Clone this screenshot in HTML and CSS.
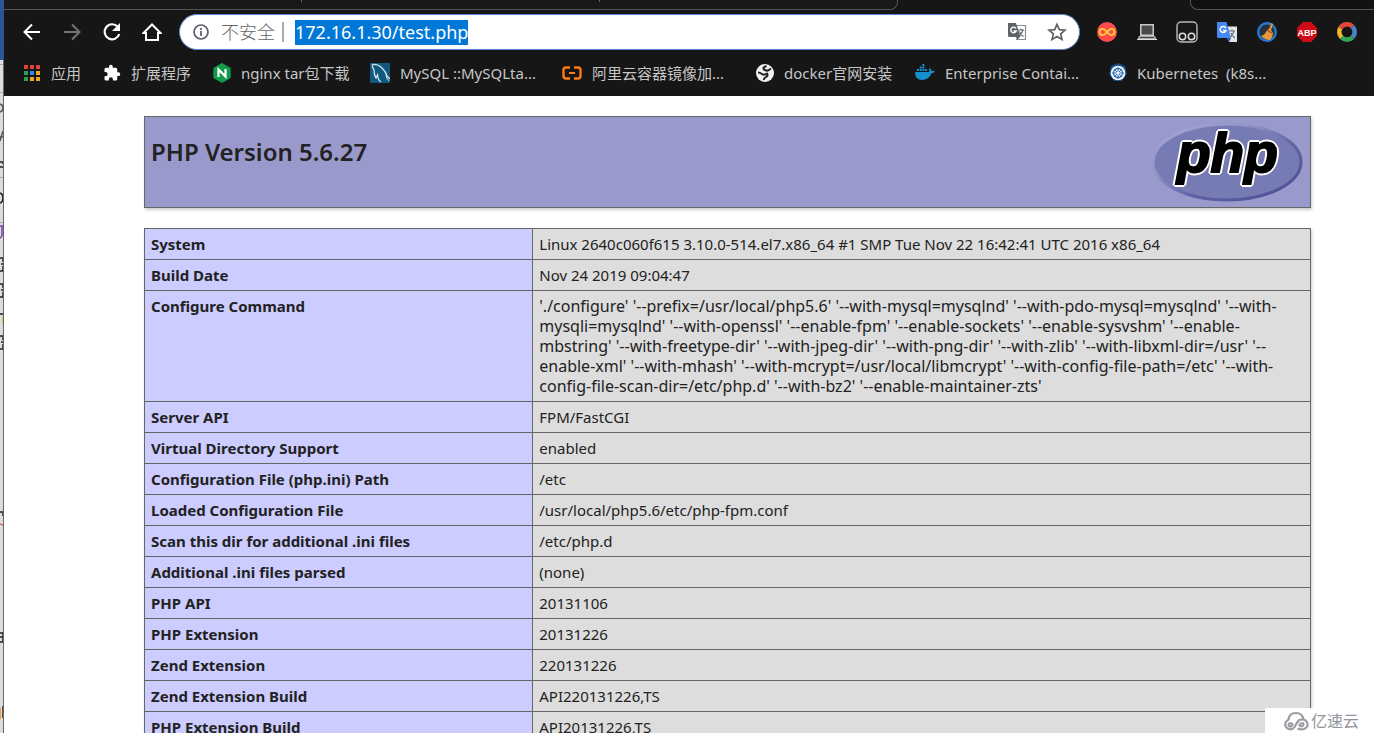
FILE: index.html
```html
<!DOCTYPE html>
<html lang="zh-CN">
<head>
<meta charset="utf-8">
<title>phpinfo()</title>
<link rel="stylesheet" href="styles.css">
</head>
<body>
<aside class="behind" aria-hidden="true">
<svg class="behind-art" width="4" height="733" viewBox="0 0 4 733">
<rect width="4" height="60" fill="#2b579a"/>
<rect y="60" width="4" height="673" fill="#dedddb"/>
<path d="M0 64.500h4M0 92.500h4M0 177.500h4M0 222.500h4" stroke="#aaa"/>
<g fill="none" stroke="#222" stroke-width="1.500">
<path d="M0 104q3 1 3 4t-3 4M0 141l3-10M0 137h3" stroke="#555"/>
<path d="M0 162h3v2M0 167h3"/>
<path d="M0 193q3 1 3 5t-3 5"/>
<path d="M0 226h3M2 226v9q0 2-2 3" stroke="#7040b0"/>
<path d="M0 258h3v4M1 264h2M0 271h3v-5M0 284h3v4M1 290h2M0 297h3v-5M0 314h3M0 336h3v4M1 342h2M0 349h3v-5"/>
<path d="M0 512h3v4M0 633h3v9M0 637h3M0 642h3M3 706v12"/>
<path d="M3 315v10" stroke="#d9c24a"/>
</g>
<path d="M0 524q3 0 4 3" stroke="#c0392b" fill="none"/>
<path d="M.500 708v11" stroke="#e8a23a"/>
<path d="M3.500 60v673" stroke="#666"/>
</svg>
</aside>
<div class="browser">
<header class="chrome">
<div class="tabs"><div class="tab-edge tab-left"><i></i><i></i></div><div class="tab-edge tab-right"></div></div>
<div class="toolbar">
<nav class="nav">
<button class="tool" aria-label="Back"><svg width="20" height="20" viewBox="0 0 20 20"><path d="M18 10H3M10 2.500 2.500 10l7.500 7.500" fill="none" stroke="#fff" stroke-width="2"/></svg></button>
<button class="tool" aria-label="Forward"><svg width="20" height="20" viewBox="0 0 20 20"><path d="M2 10h15M10 2.500 17.500 10 10 17.500" fill="none" stroke="#757575" stroke-width="2"/></svg></button>
<button class="tool" aria-label="Reload"><svg width="20" height="20" viewBox="0 0 20 20"><path d="M15.600 4.600A7.500 7.500 0 1 0 17.300 12" fill="none" stroke="#fff" stroke-width="2.200"/><path d="M18 1v8h-8z" fill="#fff"/></svg></button>
<button class="tool" aria-label="Home"><svg width="20" height="20" viewBox="0 0 20 20"><path d="M1.500 11 10 2.500l8.500 8.500H16v7H4v-7z" fill="none" stroke="#fff" stroke-width="2"/></svg></button>
</nav>
<form class="omnibox">
<button type="button" class="info" aria-label="Site information"><svg width="16" height="16" viewBox="0 0 16 16"><circle cx="8" cy="8" r="7" fill="none" stroke="#5f6368" stroke-width="1.700"/><path d="M8 7v5M8 4v2" stroke="#5f6368" stroke-width="1.800"/></svg><span>不安全</span></button>
<span class="bar"></span>
<input class="url" aria-label="Address" value="172.16.1.30/test.php">
<button type="button" class="tool" aria-label="Translate this page"><svg width="20" height="20" viewBox="0 0 20 20"><path d="M8 3.500h10.500v14H9" fill="#fff" stroke="#8a8d90" stroke-width="1.200"/><path d="M1 1h8l4.500 14H2.500Q1 15 1 13.500z" fill="#5f6368"/><path d="M9 6.500A2.800 2.800 0 1 0 9.200 9H6.500" fill="none" stroke="#fff" stroke-width="1.400"/><path d="M11 8h6M14 6.500V8M16 8q-1 4-4 6M12.500 9.500q1 3 4 5" fill="none" stroke="#5f6368" stroke-width="1.100"/><path d="M9 15h4l-3 3z" fill="#5f6368"/></svg></button>
<button type="button" class="tool" aria-label="Bookmark"><svg width="20" height="20" viewBox="0 0 20 20"><path d="m10 2.300 2.300 5.300 5.700.500-4.300 3.800 1.300 5.700L10 14.600 5 17.600l1.300-5.700L2 8.100l5.700-.500z" fill="none" stroke="#5f6368" stroke-width="1.700"/></svg></button>
</form>
<div class="nav">
<button class="tool" aria-label="Infinity"><svg width="20" height="20" viewBox="0 0 20 20"><circle cx="10" cy="10" r="10" fill="#ff4b4b"/><path d="M10 10C8 7.500 7 6.900 5.700 6.900a3.100 3.100 0 0 0 0 6.200C7 13.100 8 12.500 10 10s3-3.100 4.300-3.100a3.100 3.100 0 0 1 0 6.200C13 13.100 12 12.500 10 10z" fill="none" stroke="#ffce3a" stroke-width="1.900"/></svg></button>
<button class="tool" aria-label="Desktop"><svg width="20" height="20" viewBox="0 0 20 20"><path d="M3 2h14v12H3z" fill="#c9c9c9"/><path d="M4.500 3.500h11v9h-11z" fill="#4a4a4a"/><path d="M2 14h16l2 4H0z" fill="#aaa"/><path d="M3 15.500h14" stroke="#444"/><path d="M0 17.500h20" stroke="#ddd"/></svg></button>
<button class="tool" aria-label="Scripts"><svg width="22" height="22" viewBox="0 0 22 22"><rect x="1" y="1" width="20" height="20" rx="4" fill="#181818" stroke="#bbb" stroke-width="1.400"/><g fill="none" stroke="#ddd" stroke-width="1.500"><circle cx="6.500" cy="15.500" r="3.200"/><circle cx="15.500" cy="15.500" r="3.200"/></g></svg></button>
<button class="tool" aria-label="Google Translate"><svg width="20" height="20" viewBox="0 0 20 20"><path d="M8 4.500h12V20h-8z" fill="#e4e7ea"/><path d="M0 0h9.500L14 16H1.500Q0 16 0 14.500z" fill="#4688f4"/><path d="m9.500 16h4.500l-2 4z" fill="#3056a8"/><path d="M8.800 6A3 3 0 1 0 9 8.500H6" fill="none" stroke="#fff" stroke-width="1.500"/><path d="M12 9h6M15 7.500V9M17 9q-1 4-3.500 6M14 11q1 3 4 5" fill="none" stroke="#607080" stroke-width="1.100"/></svg></button>
<button class="tool" aria-label="Cleaner"><svg width="20" height="20" viewBox="0 0 20 20"><circle cx="10" cy="10" r="8.800" fill="#27313e" stroke="#2878ce" stroke-width="2.400"/><path d="M14.500 1 16 2l-2 6 2 3q0 4-3 7-5 0-9-4 4-1 6-6l2-1z" fill="#e9953a"/><path d="m9.500 8 5.500 3" stroke="#8d4d24" stroke-width="1.200"/></svg></button>
<button class="tool" aria-label="Adblock Plus"><svg width="20" height="20" viewBox="0 0 20 20"><path d="M6 0h8l6 6v8l-6 6H6l-6-6V6z" fill="#cf0a14"/><text x="10" y="13.500" text-anchor="middle" class="abp">ABP</text></svg></button>
<button class="tool" aria-label="Color ring"><svg width="20" height="20" viewBox="0 0 20 20" fill="none" stroke-width="4.600"><path d="M3.300 6.200A7.700 7.700 0 0 1 15.500 4.600" stroke="#df493c"/><path d="M15.500 4.600A7.700 7.700 0 0 1 15.500 15.400" stroke="#4c7fc9"/><path d="M15.500 15.400A7.700 7.700 0 0 1 4.600 15.400" stroke="#35a853"/><path d="M4.600 15.400A7.700 7.700 0 0 1 3.300 6.200" stroke="#efb52b"/></svg></button>
</div>
</div>
<nav class="bookmarks">
<a href="#"><svg width="18" height="18" viewBox="0 0 18 18"><g fill="#e04438"><path d="M1 1h4v4H1zM7 1h4v4H7zM13 1h4v4h-4z"/></g><path d="M1 7h4v4H1zM1 13h4v4H1z" fill="#2e9e57"/><path d="M7 7h4v4H7z" fill="#2a8cf0"/><path d="M13 7h4v4h-4zM7 13h4v4H7zM13 13h4v4h-4z" fill="#f0a822"/></svg><span>应用</span></a>
<a href="#"><svg width="18" height="18" viewBox="0 0 24 24"><path d="M20.500 11H19V7a2 2 0 0 0-2-2h-4V3.500a2.500 2.500 0 0 0-5 0V5H4a2 2 0 0 0-2 2v3.800h1.500a2.700 2.700 0 0 1 0 5.400H2V20a2 2 0 0 0 2 2h3.800v-1.500a2.700 2.700 0 0 1 5.400 0V22H17a2 2 0 0 0 2-2v-4h1.500a2.500 2.500 0 0 0 0-5z" fill="#fff"/></svg><span>扩展程序</span></a>
<a href="#"><svg width="18" height="20" viewBox="0 0 18 20"><path d="m9 0 8.700 5v10L9 20 .300 15V5z" fill="#119a48"/><path d="M5.500 14V6.500l7 7V6" fill="none" stroke="#fff" stroke-width="2.200"/></svg><span>nginx tar包下载</span></a>
<a href="#"><svg width="20" height="20" viewBox="0 0 20 20"><path d="M0 0h20v20H0z" fill="#11587f"/><path d="M2.500 1.500Q8 1 12 5q4 4 5 8l3 3M2.500 1.500Q2 4 4 7q0 5 2 8 1-2 1.500-3Q8 17 11 19" fill="none" stroke="#d3e5ed" stroke-width="1.300"/><path d="M16 12q0 3 3 6" fill="none" stroke="#d3e5ed"/></svg><span>MySQL ::MySQLta...</span></a>
<a href="#"><svg width="20" height="20" viewBox="0 0 20 20"><path d="M8 4.500H4Q1.500 4.500 1.500 7v6q0 2.500 2.500 2.500h4M12 4.500h4q2.500 0 2.500 2.500v6q0 2.500-2.500 2.500h-4" fill="none" stroke="#ff7a12" stroke-width="2.400"/><path d="M7 10h6" stroke="#ff7a12" stroke-width="2"/></svg><span>阿里云容器镜像加...</span></a>
<a href="#"><svg width="18" height="18" viewBox="0 0 18 18"><circle cx="9" cy="9" r="9" fill="#f2f2f2"/><path d="M10.500 2Q6 3.500 8 5.500q1.500 1.500 4 1l3-2M2 8.500q2 0 4 1.500t5-.500q1.500 2-1 3.500T8 16" fill="none" stroke="#222" stroke-width="2"/></svg><span>docker官网安装</span></a>
<a href="#"><svg width="20" height="20" viewBox="0 0 20 20"><path d="M0 9h14q1-1 0-3l1-1q1.500 1 1.500 3 2-.500 3.500.300-1 2-3.500 2Q14 17 7 17 0 17 0 9z" fill="#168fcd"/><path d="M2 6h2v2H2zM4.700 6h2v2h-2zM7.400 6h2v2h-2zM10.100 6h2v2h-2zM4.700 3.500h2v2h-2zM7.400 3.500h2v2h-2zM7.400 1h2v2h-2z" fill="#168fcd"/></svg><span>Enterprise Contai...</span></a>
<a href="#"><svg width="18" height="20" viewBox="1 0 18 20"><path d="m10 0 7 3 2 8-5 7H6l-5-7 2-8z" fill="#164b86"/><circle cx="10" cy="10" r="7.300" fill="#eef5fb"/><circle cx="10" cy="10" r="4.500" fill="none" stroke="#2d6cb4" stroke-width="1.300"/><path d="M10 4v12M4 10h12M6 6l8 8M14 6l-8 8" stroke="#2d6cb4"/><circle cx="10" cy="10" r="1.500" fill="#eef5fb"/></svg><span>Kubernetes&nbsp; (k8s...</span></a>
</nav>
</header>
<main class="page">
<section class="banner">
<h1>PHP Version 5.6.27</h1>
<svg class="logo" width="152" height="80" viewBox="0 0 152 80" role="img" aria-label="PHP logo">
<defs>
<linearGradient id="rim" x1="0" y1="0" x2="1" y2="1"><stop offset="0" stop-color="#a9abdc"/><stop offset=".35" stop-color="#9092c6"/><stop offset=".6" stop-color="#6064a6"/><stop offset="1" stop-color="#484c91"/></linearGradient>
</defs>
<ellipse cx="76" cy="40" rx="74" ry="38" fill="#777bb3" stroke="url(#rim)" stroke-width="3"/>
<text x="26" y="50" class="logo-text">php</text>
</svg>
</section>
<table class="facts">
<tbody>
<tr><th scope="row">System</th><td>Linux 2640c060f615 3.10.0-514.el7.x86_64 #1 SMP Tue Nov 22 16:42:41 UTC 2016 x86_64</td></tr>
<tr><th scope="row">Build Date</th><td>Nov 24 2019 09:04:47</td></tr>
<tr><th scope="row">Configure Command</th><td class="command">'./configure' '--prefix=/usr/local/php5.6' '--with-mysql=mysqlnd' '--with-pdo-mysql=mysqlnd' '--with-<br>mysqli=mysqlnd' '--with-openssl' '--enable-fpm' '--enable-sockets' '--enable-sysvshm' '--enable-<br>mbstring' '--with-freetype-dir' '--with-jpeg-dir' '--with-png-dir' '--with-zlib' '--with-libxml-dir=/usr' '--<br>enable-xml' '--with-mhash' '--with-mcrypt=/usr/local/libmcrypt' '--with-config-file-path=/etc' '--with-<br>config-file-scan-dir=/etc/php.d' '--with-bz2' '--enable-maintainer-zts'</td></tr>
<tr><th scope="row">Server API</th><td>FPM/FastCGI</td></tr>
<tr><th scope="row">Virtual Directory Support</th><td>enabled</td></tr>
<tr><th scope="row">Configuration File (php.ini) Path</th><td>/etc</td></tr>
<tr><th scope="row">Loaded Configuration File</th><td>/usr/local/php5.6/etc/php-fpm.conf</td></tr>
<tr><th scope="row">Scan this dir for additional .ini files</th><td>/etc/php.d</td></tr>
<tr><th scope="row">Additional .ini files parsed</th><td>(none)</td></tr>
<tr><th scope="row">PHP API</th><td>20131106</td></tr>
<tr><th scope="row">PHP Extension</th><td>20131226</td></tr>
<tr><th scope="row">Zend Extension</th><td>220131226</td></tr>
<tr><th scope="row">Zend Extension Build</th><td>API220131226,TS</td></tr>
<tr><th scope="row">PHP Extension Build</th><td>API20131226,TS</td></tr>
</tbody>
</table>
</main>
</div>
<div class="watermark"><svg width="26" height="20" viewBox="0 0 26 20" fill="none" stroke="#9a9da3" stroke-width="2.200"><path d="M5.500 9Q6 2 13 2q6 0 7.500 6"/><path d="M6 8.500a5 5 0 1 0 5.500 7.500q2-4 5-7M9.500 13.500q-1.500-2-3-1-2 1.500 0 3 2 .500 3-2zM14.500 17.500q3 1.500 6.500.500 4-1.500 3.500-5-1-4.500-5-4.500-5 0-6 4.500M16.500 14q1 2 3 1 2-2 0-3-2 0-3 2z"/></svg><span>亿速云</span></div>
</body>
</html>
```
FILE: styles.css
```css
* { box-sizing: border-box; }
body {
  margin: 0;
  height: 100vh;
  display: flex;
  overflow: hidden;
  background: #fff;
  color: #222;
  font: 15px/20px "Noto Sans", "Noto Sans CJK SC", sans-serif;
}
button, input { font: inherit; color: inherit; border: 0; padding: 0; background: none; }
svg { display: block; flex: none; }

.behind { flex: none; width: 4px; overflow: hidden; background: #dedddb; }
.browser { flex: 1; min-width: 0; display: flex; flex-direction: column; }

.chrome { flex: none; height: 96px; background: #161616; }
.tabs { display: flex; height: 10px; justify-content: space-between; }
.tab-edge { border: 1px solid #555; border-top: 0; background: #191919; }
.tab-left { width: 894px; border-left: 0; border-radius: 0 0 8px 0; display: flex; justify-content: space-evenly; }
.tab-left i { width: 1px; height: 2px; background: #666; }
.tab-right { width: 184px; border-right: 0; border-radius: 0 0 0 8px; background: #111; }

.toolbar { display: flex; align-items: center; gap: 7px; height: 44px; padding: 0 7px 0 8px; }
.nav { display: flex; }
.tool { width: 40px; height: 32px; display: grid; place-items: center; }
.omnibox {
  flex: 1;
  display: flex;
  align-items: center;
  height: 36px;
  padding: 0 2px 0 13px;
  border: 1px solid #5f86d8;
  border-radius: 18px;
  background: #fff;
}
.info { display: flex; align-items: center; gap: 12px; color: #5f6368; font-size: 18px; font-weight: 300; }
.bar { width: 2px; height: 20px; margin: 0 11px 0 7px; background: #aaa; }
.url { width: 173px; height: 25px; margin-right: auto; background: #0078d7; color: #fff; font-size: 18px; line-height: 25px; }
.abp { font: bold 9px "Liberation Sans", sans-serif; fill: #fff; }

.bookmarks {
  display: grid;
  grid-template-columns: 80px 110px 157px 192px 194px 159px 194px 1fr;
  align-items: center;
  height: 38px;
  padding-left: 19px;
}
.bookmarks a { display: flex; align-items: center; gap: 10px; color: #c6c6c6; text-decoration: none; white-space: nowrap; }

.page { flex: 1; min-height: 0; overflow: hidden; padding: 20px 63px 0 140px; }
.banner {
  display: flex;
  justify-content: space-between;
  height: 92px;
  padding: 5px 7px 5px 6px;
  border: 1px solid #666;
  background: #9999cc;
  box-shadow: 1px 2px 3px #ccc;
}
h1 { margin: 14px 0 0; font-size: 24px; line-height: 32px; font-weight: 600; }
.logo-text {
  font: italic bold 55px "Liberation Sans", sans-serif;
  fill: #000;
  stroke: #000;
  stroke-width: 2px;
  filter: drop-shadow(1px 1px #fff) drop-shadow(-1px -1px #fff) drop-shadow(1px -1px #fff) drop-shadow(-1px 1px #fff);
}
.facts {
  width: 100%;
  margin-top: 20px;
  table-layout: fixed;
  border-collapse: collapse;
  box-shadow: 1px 2px 3px #ccc;
}
.facts th, .facts td { border: 1px solid #666; padding: 5px 6px; text-align: left; vertical-align: top; }
.facts th { width: 33.300%; background: #ccccff; font-weight: 700; }
.facts td { background: #ddd; white-space: nowrap; }
.facts .command { font-size: 16px; }

.watermark {
  position: absolute;
  right: 0;
  bottom: 0;
  display: flex;
  align-items: center;
  gap: 2px;
  width: 109px;
  height: 25px;
  padding-left: 18px;
  background: #fff;
  color: #92959b;
  font-size: 16px;
}
```
